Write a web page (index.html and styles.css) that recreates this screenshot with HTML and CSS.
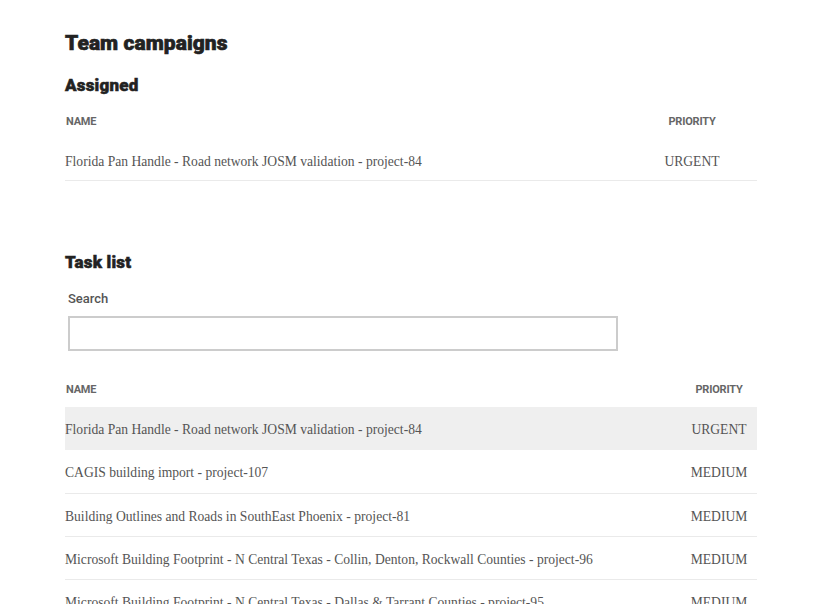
FILE: index.html
```html
<!DOCTYPE html>
<html>
<head>
<meta charset="utf-8">
<link rel="stylesheet" href="styles.css">
</head>
<body>
<main class="page">
  <h1 class="title">Team campaigns</h1>
  <h2 class="subtitle">Assigned</h2>
  <table class="grid grid-assigned">
    <thead>
      <tr><th class="col-name">Name</th><th class="col-priority">Priority</th></tr>
    </thead>
    <tbody>
      <tr><td>Florida Pan Handle - Road network JOSM validation - project-84</td><td class="prio">URGENT</td></tr>
    </tbody>
  </table>

  <h2 class="subtitle tasks">Task list</h2>
  <label class="search">
    <span class="search-label">Search</span>
    <input class="search-input" type="text">
  </label>
  <table class="grid grid-tasks">
    <thead>
      <tr><th class="col-name">Name</th><th class="col-priority-narrow">Priority</th></tr>
    </thead>
    <tbody>
      <tr class="active"><td>Florida Pan Handle - Road network JOSM validation - project-84</td><td class="prio">URGENT</td></tr>
      <tr><td>CAGIS building import - project-107</td><td class="prio">MEDIUM</td></tr>
      <tr><td>Building Outlines and Roads in SouthEast Phoenix - project-81</td><td class="prio">MEDIUM</td></tr>
      <tr><td>Microsoft Building Footprint - N Central Texas - Collin, Denton, Rockwall Counties - project-96</td><td class="prio">MEDIUM</td></tr>
      <tr><td>Microsoft Building Footprint - N Central Texas - Dallas &amp; Tarrant Counties - project-95</td><td class="prio">MEDIUM</td></tr>
    </tbody>
  </table>
</main>
</body>
</html>
```
FILE: styles.css
```css
html, body { margin: 0; padding: 0; background: #fff; }
.page {
  width: 692px;
  padding: 31px 0 0 65px;
  font-family: "Liberation Serif", serif;
}
.title {
  font-family: Roboto, sans-serif;
  font-weight: 900;
  font-size: 21px;
  line-height: 24px;
  color: #222;
  -webkit-text-stroke: 0.6px #222;
  letter-spacing: 0.05px;
  margin: 0 0 20px 0;
}
.subtitle {
  font-family: Roboto, sans-serif;
  font-weight: 900;
  font-size: 17px;
  line-height: 20px;
  color: #222;
  -webkit-text-stroke: 0.5px #222;
  letter-spacing: 0.2px;
  margin: 0 0 6px 0;
}
.subtitle.tasks { margin-top: 71px; margin-bottom: 19px; }
.grid {
  width: 692px;
  border-collapse: collapse;
}
.grid th {
  font-family: Roboto, sans-serif;
  font-weight: 700;
  font-size: 11px;
  text-transform: uppercase;
  color: #666;
  letter-spacing: -0.2px;
  height: 40px;
  padding: 0;
  vertical-align: middle;
}
.grid-tasks th { height: 36px; }
.grid th.col-name { text-align: left; padding-left: 1px; }
.col-priority { width: 130px; text-align: center; }
.col-priority-narrow { width: 76px; text-align: center; }
.grid td {
  font-size: 13.6px;
  color: #555;
  height: 37px;
  padding: 2px 0 0 0;
  border-bottom: 1px solid #eaeaea;
  vertical-align: middle;
}
.grid-tasks td { height: 38.3px; padding-top: 4px; }
.grid td.prio { text-align: center; }
.grid-tasks tr.active td { background: #efefef; border-bottom-color: #efefef; }
.search { display: block; padding-left: 3px; margin-bottom: 20px; }
.search-label {
  display: block;
  font-family: Roboto, sans-serif;
  font-weight: 500;
  font-size: 13px;
  color: #555;
  margin-bottom: 10px;
}
.search-input {
  display: block;
  box-sizing: border-box;
  width: 550px;
  height: 35px;
  border: 2px solid #ccc;
  margin: 0;
  padding: 0 8px;
  background: #fff;
  outline: none;
}
```
